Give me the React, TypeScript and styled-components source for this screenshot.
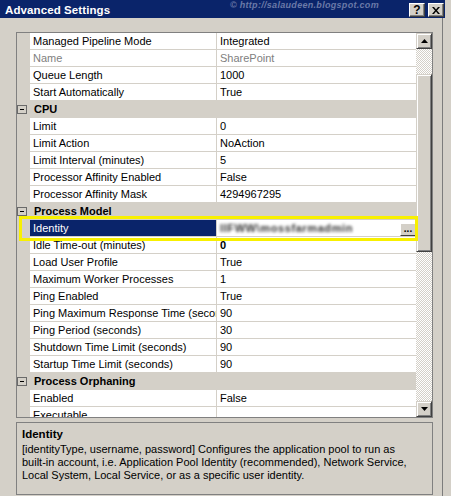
import React from 'react';
import styled, { createGlobalStyle } from 'styled-components';

const GlobalStyle = createGlobalStyle`
  html, body {
    margin: 0;
    padding: 0;
    background: #d4d0c8;
  }
  body {
    font-family: "Liberation Sans", Arial, sans-serif;
    font-size: 11px;
    color: #000;
  }
`;

interface PropRow {
  kind: 'prop';
  label: string;
  value: string;
  disabled?: boolean;
  bold?: boolean;
  selected?: boolean;
}

interface CategoryRow {
  kind: 'category';
  label: string;
}

type Row = PropRow | CategoryRow;

const rows: Row[] = [
  { kind: 'prop', label: 'Managed Pipeline Mode', value: 'Integrated' },
  { kind: 'prop', label: 'Name', value: 'SharePoint', disabled: true },
  { kind: 'prop', label: 'Queue Length', value: '1000' },
  { kind: 'prop', label: 'Start Automatically', value: 'True' },
  { kind: 'category', label: 'CPU' },
  { kind: 'prop', label: 'Limit', value: '0' },
  { kind: 'prop', label: 'Limit Action', value: 'NoAction' },
  { kind: 'prop', label: 'Limit Interval (minutes)', value: '5' },
  { kind: 'prop', label: 'Processor Affinity Enabled', value: 'False' },
  { kind: 'prop', label: 'Processor Affinity Mask', value: '4294967295' },
  { kind: 'category', label: 'Process Model' },
  { kind: 'prop', label: 'Identity', value: 'IIFWW\\mossfarmadmin', selected: true },
  { kind: 'prop', label: 'Idle Time-out (minutes)', value: '0', bold: true },
  { kind: 'prop', label: 'Load User Profile', value: 'True' },
  { kind: 'prop', label: 'Maximum Worker Processes', value: '1' },
  { kind: 'prop', label: 'Ping Enabled', value: 'True' },
  { kind: 'prop', label: 'Ping Maximum Response Time (seconds)', value: '90' },
  { kind: 'prop', label: 'Ping Period (seconds)', value: '30' },
  { kind: 'prop', label: 'Shutdown Time Limit (seconds)', value: '90' },
  { kind: 'prop', label: 'Startup Time Limit (seconds)', value: '90' },
  { kind: 'category', label: 'Process Orphaning' },
  { kind: 'prop', label: 'Enabled', value: 'False' },
  { kind: 'prop', label: 'Executable', value: '' }
];

export default function App() {
  return (
    <>
      <GlobalStyle />
      <Window>
        <TitleBar>
          <Title>Advanced Settings</Title>
          <Watermark>© http://salaudeen.blogspot.com</Watermark>
          <TitleButtons>
            <CaptionButton>?</CaptionButton>
            <CaptionButton>
              <svg width="8" height="7" viewBox="0 0 8 7">
                <path d="M0 0h2l2 2.5L6 0h2L5 3.5 8 7H6L4 4.5 2 7H0l3-3.5z" fill="#000" />
              </svg>
            </CaptionButton>
          </TitleButtons>
        </TitleBar>
        <Frame>
          <Content>
            <Grid>
              <RowsArea>
                {rows.map((row, i) =>
                  row.kind === 'category' ? (
                    <CategoryLine key={i}>
                      <Gutter>
                        <MinusBox />
                      </Gutter>
                      <CategoryLabel>{row.label}</CategoryLabel>
                    </CategoryLine>
                  ) : (
                    <PropLine key={i}>
                      <Gutter />
                      <LabelCell $selected={row.selected} $disabled={row.disabled}>
                        {row.label}
                      </LabelCell>
                      <ValueCell $disabled={row.disabled} $bold={row.bold}>
                        {row.selected ? (
                          <>
                            <BlurredValue>{row.value}</BlurredValue>
                            <EllipsisButton>...</EllipsisButton>
                          </>
                        ) : (
                          row.value
                        )}
                      </ValueCell>
                    </PropLine>
                  )
                )}
              </RowsArea>
              <ScrollBar>
                <ScrollButton>
                  <svg width="7" height="4" viewBox="0 0 7 4">
                    <path d="M3.5 0L7 4H0z" fill="#000" />
                  </svg>
                </ScrollButton>
                <Track $size={25} />
                <Thumb />
                <Track $size={0} />
                <ScrollButton>
                  <svg width="7" height="4" viewBox="0 0 7 4">
                    <path d="M0 0h7L3.5 4z" fill="#000" />
                  </svg>
                </ScrollButton>
              </ScrollBar>
              <Highlight />
            </Grid>
            <Description>
              <DescTitle>Identity</DescTitle>
              <DescText>
                [identityType, username, password] Configures the application pool to run as
                <br />
                built-in account, i.e. Application Pool Identity (recommended), Network Service,
                <br />
                Local System, Local Service, or as a specific user identity.
              </DescText>
            </Description>
          </Content>
        </Frame>
      </Window>
    </>
  );
}

const Window = styled.div`
  width: 451px;
  height: 496px;
  display: flex;
  flex-direction: column;
  overflow: hidden;
  background: #d4d0c8;
`;

const TitleBar = styled.div`
  position: relative;
  width: 445px;
  height: 18px;
  flex-shrink: 0;
  background: #0a246a;
  display: flex;
  align-items: center;
  padding-left: 5px;
  box-sizing: border-box;
`;

const Title = styled.div`
  color: #fff;
  font-weight: bold;
  font-size: 11.5px;
  letter-spacing: 0.1px;
  padding-top: 2px;
`;

const Watermark = styled.div`
  position: absolute;
  left: 230px;
  top: 0px;
  font-size: 9px;
  font-style: italic;
  font-weight: bold;
  color: #6a7aa8;
  letter-spacing: 0.3px;
`;

const TitleButtons = styled.div`
  margin-left: auto;
  margin-right: 1px;
  display: flex;
  gap: 3px;
  padding-top: 2px;
`;

const CaptionButton = styled.div`
  width: 16px;
  height: 14px;
  box-sizing: border-box;
  background: #d4d0c8;
  border-top: 1px solid #fff;
  border-left: 1px solid #fff;
  border-right: 1px solid #404040;
  border-bottom: 1px solid #404040;
  box-shadow: inset -1px -1px 0 #808080;
  display: flex;
  align-items: center;
  justify-content: center;
  font-weight: bold;
  font-size: 12px;
  line-height: 1;
`;

const Frame = styled.div`
  flex: 1;
  display: flex;
`;

const Content = styled.div`
  width: 443px;
  border-right: 1px solid #7c7c7c;
  padding: 14px 10px 0 16px;
  box-sizing: border-box;
  display: flex;
  flex-direction: column;
  gap: 4px;
`;

const Grid = styled.div`
  position: relative;
  width: 417px;
  height: 386px;
  box-sizing: border-box;
  border: 1px solid #808080;
  display: flex;
  background: #fff;
`;

const RowsArea = styled.div`
  width: 399px;
  height: 384px;
  overflow: hidden;
`;

const Line = styled.div`
  height: 17px;
  display: grid;
  grid-template-columns: 13px 187px 199px;
  box-sizing: border-box;
`;

const PropLine = styled(Line)``;

const CategoryLine = styled(Line)`
  grid-template-columns: 13px 386px;
  background: #d4d0c8;
`;

const Gutter = styled.div`
  background: #d4d0c8;
  display: flex;
  align-items: center;
`;

const MinusBox = styled.div`
  position: relative;
  width: 10px;
  height: 9px;
  box-sizing: border-box;
  border: 1px solid #6a6a6a;
  &::after {
    content: '';
    position: absolute;
    left: 2px;
    top: 3px;
    width: 4px;
    height: 1px;
    background: #000;
  }
`;

const CategoryLabel = styled.div`
  font-weight: bold;
  padding-left: 4px;
  line-height: 17px;
  white-space: nowrap;
`;

const Cell = styled.div`
  line-height: 16px;
  border-bottom: 1px solid #d4d0c8;
  white-space: nowrap;
  overflow: hidden;
  text-overflow: clip;
`;

const LabelCell = styled(Cell)<{ $selected?: boolean; $disabled?: boolean }>`
  padding-left: 3px;
  border-right: 1px solid #d4d0c8;
  background: ${(p) => (p.$selected ? '#0a246a' : '#fff')};
  color: ${(p) => (p.$selected ? '#fff' : p.$disabled ? '#808080' : '#000')};
`;

const ValueCell = styled(Cell)<{ $disabled?: boolean; $bold?: boolean }>`
  position: relative;
  padding-left: 3px;
  color: ${(p) => (p.$disabled ? '#808080' : '#000')};
  font-weight: ${(p) => (p.$bold ? 'bold' : 'normal')};
`;

const BlurredValue = styled.span`
  color: #333;
  font-weight: bold;
  filter: blur(1.4px);
  letter-spacing: 0.6px;
`;

const EllipsisButton = styled.div`
  position: absolute;
  right: 0px;
  top: 3px;
  width: 16px;
  height: 13px;
  box-sizing: border-box;
  background: #d4d0c8;
  border-top: 1px solid #fff;
  border-left: 1px solid #fff;
  border-right: 1px solid #404040;
  border-bottom: 1px solid #404040;
  font-size: 10px;
  line-height: 9px;
  text-align: center;
  font-weight: bold;
`;

const ScrollBar = styled.div`
  width: 16px;
  display: flex;
  flex-direction: column;
`;

const Raised = styled.div`
  width: 16px;
  box-sizing: border-box;
  background: #d4d0c8;
  border-top: 1px solid #d4d0c8;
  border-left: 1px solid #d4d0c8;
  border-right: 1px solid #404040;
  border-bottom: 1px solid #404040;
  box-shadow: inset 1px 1px 0 #fff, inset -1px -1px 0 #808080;
`;

const ScrollButton = styled(Raised)`
  height: 16px;
  flex-shrink: 0;
  display: flex;
  align-items: center;
  justify-content: center;
`;

const Track = styled.div<{ $size: number }>`
  flex: ${(p) => (p.$size ? `0 0 ${p.$size}px` : '1')};
  background: repeating-conic-gradient(#d4d0c8 0 25%, #fff 0 50%) 0 0 / 2px 2px;
`;

const Thumb = styled(Raised)`
  height: 178px;
  flex-shrink: 0;
`;

const Highlight = styled.div`
  position: absolute;
  left: 2px;
  top: 183px;
  width: 399px;
  height: 25px;
  box-sizing: border-box;
  border: 3px solid #f8f000;
  pointer-events: none;
`;

const Description = styled.div`
  width: 417px;
  height: 73px;
  box-sizing: border-box;
  border: 1px solid #808080;
  padding: 4px 5px;
`;

const DescTitle = styled.div`
  font-weight: bold;
  font-size: 11.5px;
  line-height: 14px;
`;

const DescText = styled.div`
  margin-top: 2px;
  line-height: 13px;
  white-space: nowrap;
`;
